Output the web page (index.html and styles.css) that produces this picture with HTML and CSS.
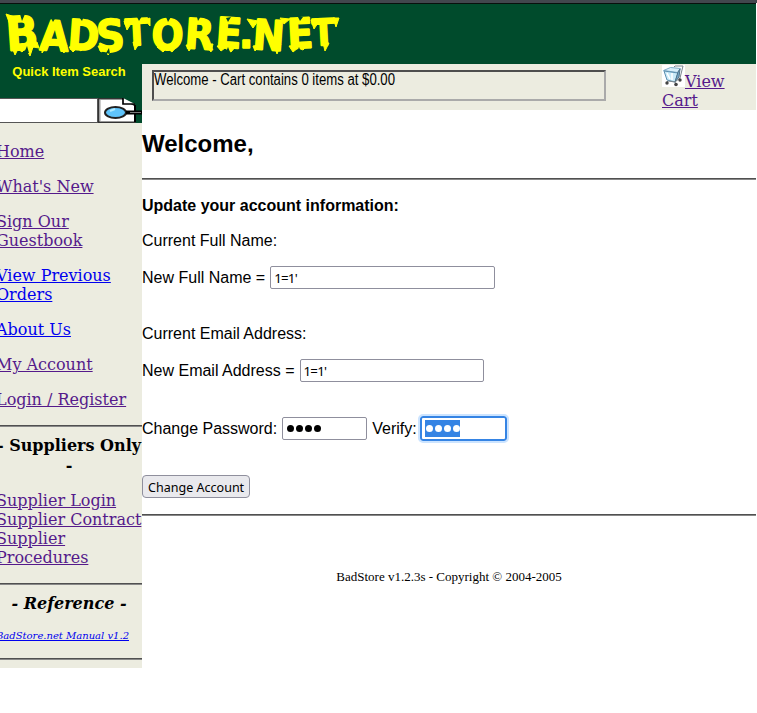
FILE: index.html
```html
<!DOCTYPE html>
<html lang="en">
<head>
<meta charset="utf-8">
<title>BadStore.net</title>
<link rel="stylesheet" href="styles.css">
</head>
<body>
<header class="banner">
<svg class="logo" width="350" height="60" viewBox="0 4 350 60">
<text class="logo-text"><tspan class="big" x="7" y="51" rotate="-4">B</tspan><tspan x="39 67" y="50 49" rotate="3 4">AD</tspan><tspan class="ess" x="97" y="52" rotate="-3">S</tspan><tspan class="tee" x="126" y="46" rotate="-3">T</tspan><tspan x="151 184 215 239 252 288" y="49 48 47 48 49 49" rotate="2 4 4 0 4 -3">ORE.NE</tspan><tspan class="tee" x="313" y="46" rotate="-3">T</tspan></text>
<path class="drips" d="M6 14l9 3-1 18zM12 47l3 8 3-6 4 3 4-4 4 8 3-9 6 1-2-6zM42 47l0 6 5-7zM59 46l5 7 3-8zM69 47l4 5 4-4 4 3 6-6zM98 46l3 6 5-3 2 6 5-5 7-3zM133 42l2 8 5-8zM124 21l3 9 5-8zM145 20l5 6 0-8zM157 47l6 5 4-4 5 4 6-7zM186 45l3 6 4-6zM205 44l6 8 2-8zM217 46l4 5 4-3 6 4 6-7zM247 19l11 2-5 7zM253 46l2 5 5-6zM273 42l4 12 4-10zM280 18l10 1-6 5zM289 46l4 6 5-4 5 2 6-6zM323 43l2 8 4-8zM311 20l3 9 6-9zM333 18l6 0-3 9z"/>
<path class="cuts" d="M20 14l2 7 3-7zM24 53l3-7 2 7zM51 18l2 4 3-5zM79 17l3 4 2-5zM106 53l3-5 1 6zM137 17l2 4 3-5zM166 17l2 5 3-5zM197 17l1 4 3-5zM226 18l2 4 3-5zM298 17l2 4 3-4zM226 52l2-5 2 5zM297 52l2-5 2 5z"/>
</svg>
</header>
<div class="page">
<aside class="sidebar">
<form class="search">
<label class="search-title">Quick Item Search</label>
<div class="search-row"><span class="search-field"></span><svg width="44" height="25" viewBox="0 0 44 25"><path fill="#fff" stroke="#333" stroke-width="1.500" d="M.7.7H25l12 7v16.5H.7z"/><path fill="none" stroke="#999" d="M2 1v22"/><path fill="#fff" stroke="#000" stroke-width="1.700" d="M25 0v6h12"/><path stroke="#000" stroke-width="2" d="M37 7v17"/><ellipse cx="17.500" cy="14.500" rx="10.500" ry="5.500" fill="#5fc4fb" stroke="#222" stroke-width="2"/><path stroke="#aeeaff" stroke-width="2" d="M12 13l5-2"/><path stroke="#000" stroke-width="4" d="M28 14.500h16"/><path stroke="#777" d="M32 14.500h11"/></svg></div>
</form>
<nav class="links">
<p><a href="#">Home</a></p>
<p><a href="#">What's New</a></p>
<p><a href="#">Sign Our<br>Guestbook</a></p>
<p><a class="fresh" href="#">View Previous<br>Orders</a></p>
<p><a class="fresh" href="#">About Us</a></p>
<p><a href="#">My Account</a></p>
<p><a href="#">Login / Register</a></p>
<hr>
<h4 class="group suppliers">- Suppliers Only<br>-</h4>
<p><a href="#">Supplier Login</a><br><a href="#">Supplier Contract</a><br><a href="#">Supplier<br>Procedures</a></p>
<hr>
<h4 class="group reference">- Reference -</h4>
<p class="manual"><a class="fresh" href="#">BadStore.net Manual v1.2</a></p>
<hr>
</nav>
</aside>
<div class="content">
<div class="cartbar">
<div class="status"><span>Welcome - Cart contains 0 items at $0.00</span></div>
<a class="cart" href="#"><svg width="23" height="22" viewBox="0 0 23 22"><path fill="#fff" d="M0 0h23v22H0z"/><path fill="#d8effa" stroke="#7eacc7" d="M1.500 5.500l14 2 3-4-10-1z"/><path fill="#c9eaf8" stroke="#5d90b0" d="M2 6l3 9 8 2 3-9z"/><path fill="#75a9c7" stroke="#4e7189" d="M16 7l2-3-1 8-4 5z"/><path fill="none" stroke="#fff" stroke-width="1.500" d="M5 8l3 6M10 8v7"/><path fill="none" stroke="#7a868d" d="M12 2l1-1h8l-3 12-5 4-7-1-2 2M13 17l1 2"/><g fill="#444"><circle cx="5" cy="18" r="1.700"/><circle cx="14" cy="19.500" r="1.800"/><circle cx="18" cy="15" r="1.700"/></g></svg>View<br>Cart</a>
</div>
<main class="account">
<h2>Welcome,</h2>
<hr>
<p class="line strong">Update your account information:</p>
<p class="line">Current Full Name:</p>
<div class="row"><label>New Full Name =</label><input class="name" value="1=1'"></div>
<p class="line later">Current Email Address:</p>
<div class="row"><label>New Email Address =</label><input class="email" value="1=1'"></div>
<div class="row passwords"><label>Change Password:</label><span class="secret"><span class="dots"><i></i><i></i><i></i><i></i></span></span><label class="verify">Verify:</label><span class="secret focused"><span class="dots"><i></i><i></i><i></i><i></i></span></span></div>
<button type="button"><span>Change Account</span></button>
<hr>
<footer>BadStore v1.2.3s - Copyright © 2004-2005</footer>
</main>
</div>
</div>
</body>
</html>
```
FILE: styles.css
```css
* { box-sizing: border-box; }
body { margin: 0; width: 757px; height: 713px; overflow: hidden; background: #fff; color: #000; font: 16px/18px "Liberation Sans", sans-serif; border-top: 3px solid #42474e; }
.banner { width: 756px; height: 61px; background: #004b2c; border-top: 1px solid #08100d; }
.logo { display: block; }
.logo-text { font: bold 42px "DejaVu Sans Condensed", "DejaVu Sans", sans-serif; font-stretch: condensed; fill: #ff0; stroke: #ff0; stroke-width: 1.5px; stroke-linejoin: bevel; }
.logo-text .big { font-size: 47px; }
.logo-text .ess { font-size: 44px; }
.logo-text .tee { font-size: 37px; }
.drips { fill: #ff0; stroke: #ff0; stroke-width: 1px; stroke-linejoin: round; }
.cuts { fill: #004b2c; }
.page { display: flex; width: 756px; align-items: flex-start; }
.sidebar { width: 142px; height: 604px; flex: none; overflow: hidden; background: #ecece0; font: 16px/19px "DejaVu Serif", serif; }
.search { height: 59px; background: #004b2c; }
.search-title { display: block; height: 34px; width: 138px; color: #ff0; text-align: center; font: bold 13px/16px "Liberation Sans", sans-serif; }
.search-row { display: flex; height: 25px; }
.search-field { width: 98px; background: #fff; border: solid #555; border-width: 1px 1px 1px 0; }
.links { margin-left: -4px; padding-top: 19px; width: 146px; white-space: nowrap; }
.links p { margin: 0 0 16px; }
.links a, .cart { color: #551a8b; }
.links a.fresh { color: #0000ee; }
hr { height: 2px; margin: 0; border: solid #505050; border-width: 1px 0; border-bottom-color: #888; }
.group { font-size: 16px; line-height: 20px; text-align: center; }
.suppliers { margin: 9px 0 15px; }
.reference { margin: 9px 0 15px; font-style: italic; }
.links .manual { margin-bottom: 15px; font-size: 10px; line-height: 14px; font-style: italic; }
.content { width: 614px; }
.cartbar { display: flex; height: 46px; padding-left: 10px; background: #ecece0; }
.status { width: 454px; height: 31px; margin-top: 6px; border: 2px solid #4e4e4e; border-right-color: #aaa; border-bottom-color: #aaa; line-height: 16px; }
.status span { display: inline-block; transform: scaleX(.822); transform-origin: left; white-space: nowrap; }
.cart { margin-left: 56px; font: 16px/19px "DejaVu Serif", serif; padding-top: 1px; }
.cart svg { vertical-align: 0; }
.account { padding-top: 20px; }
h2 { margin: 0 0 20px; font-size: 24px; line-height: 28px; }
.line { margin: 17px 0; }
.strong { font-weight: bold; }
.row { display: flex; align-items: center; height: 23px; margin-top: -1px; gap: 5px; }
.line + .row { margin-top: 16px; }
.line:has(+ .row) { margin-bottom: 0; }
.line.later { margin-top: 36px; }
input, .secret { height: 23px; padding: 1px 3px; border: 1px solid #8f8f9d; border-radius: 2px; background: #fff; font: 13.33px "Noto Sans", sans-serif; }
input { letter-spacing: -.8px; outline: 0; }
.name { width: 225px; }
.email { width: 184px; }
.row.passwords { margin-top: 35px; }
.secret { display: flex; align-items: center; width: 85px; }
.dots { display: flex; align-items: center; gap: 2px; height: 17px; padding: 0 0 0 1px; color: #000; }
.dots i { width: 7px; height: 7px; border-radius: 50%; background: currentColor; }
.focused { width: 87px; height: 25px; margin-left: -2px; border: 2px solid #3584e4; border-radius: 3px; outline: 2px solid #cce4ff; }
.focused .dots { background: #3584e4; color: #fff; }
button { display: flex; justify-content: center; align-items: center; width: 108px; height: 23px; margin: 35px 0 16px; padding: 0; border: 1px solid #8f8f9d; border-radius: 4px; background: #e9e9ed; color: #000; font: 13.33px "Noto Sans", sans-serif; white-space: nowrap; }
button span { transform: scaleX(.94); }
footer { margin-top: 53px; text-align: center; font: 13px/16px "Liberation Serif", serif; }
```
